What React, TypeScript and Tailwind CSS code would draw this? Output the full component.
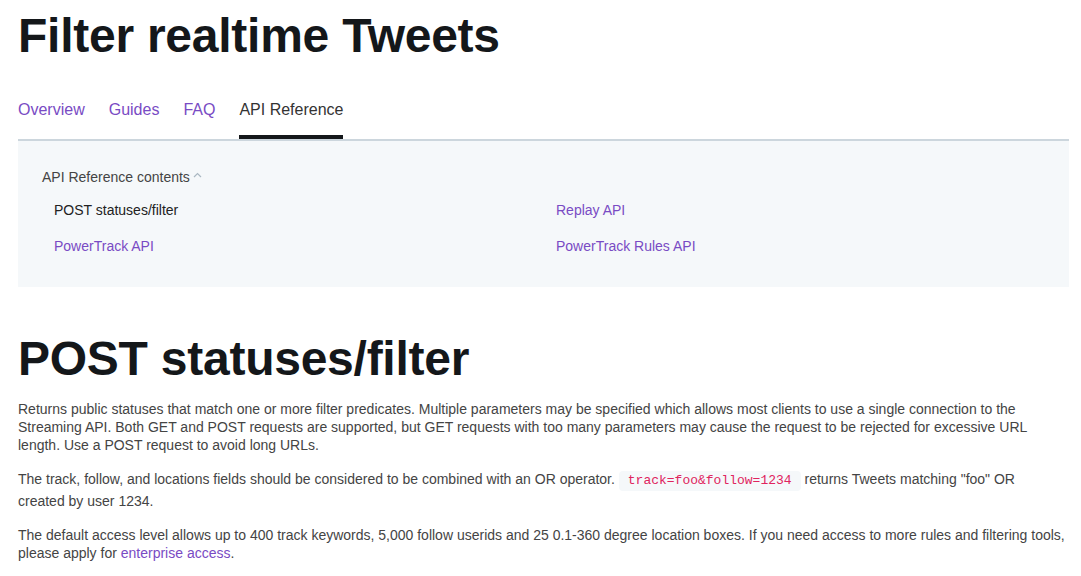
import React from "react";

const tabs = ["Overview", "Guides", "FAQ", "API Reference"];

const contents = [
  { label: "POST statuses/filter", active: true },
  { label: "Replay API", active: false },
  { label: "PowerTrack API", active: false },
  { label: "PowerTrack Rules API", active: false },
];

export default function App() {
  return (
    <div
      className="w-[1081px] min-h-[576px] bg-white pl-[18px] pr-[12px] text-[#444]"
      style={{ fontFamily: '"Liberation Sans", Arial, sans-serif' }}
    >
      <h1 className="pt-[7px] text-[48px] leading-[58px] font-bold tracking-[-0.25px] text-[#14171a]">
        Filter realtime Tweets
      </h1>

      {/* tabs */}
      <div className="mt-[33px] flex gap-6 border-b-2 border-[#ccd6dd]">
        {tabs.map((t) => (
          <div
            key={t}
            className={`pb-[13px] text-[16px] leading-[24px] ${
              t === "API Reference"
                ? "border-b-4 border-[#14171a] text-[#333]"
                : "border-b-4 border-transparent text-[#794bc4]"
            }`}
          >
            {t}
          </div>
        ))}
      </div>

      {/* contents box */}
      <div className="bg-[#f5f8fa] pl-[24px] pt-[26px] pb-[31px]">
        <div className="flex items-center text-[14px] leading-[20px] text-[#444]">
          API Reference contents
          <svg width="9" height="6" viewBox="0 0 9 6" className="ml-[3px] -mt-[4px]">
            <path d="M1 5 L4.5 1.5 L8 5" fill="none" stroke="#aab8c2" strokeWidth="1.2" />
          </svg>
        </div>
        <ul className="mt-[13px] grid grid-cols-[502px_1fr] gap-y-[16px] pl-[12px] text-[14px] leading-[20px]">
          {contents.map((c) => (
            <li key={c.label} className={c.active ? "text-[#222]" : "text-[#794bc4]"}>
              {c.label}
            </li>
          ))}
        </ul>
      </div>

      <h2 className="mt-[43px] text-[48px] leading-[58px] font-bold tracking-[-0.25px] text-[#14171a]">
        POST statuses/filter
      </h2>

      <div className="mt-[12px] text-[14px] leading-[18px]">
        <p className="mb-[16px]">
          Returns public statuses that match one or more filter predicates. Multiple parameters may be
          specified which allows most clients to use a single connection to the Streaming API. Both GET
          and POST requests are supported, but GET requests with too many parameters may cause the
          request to be rejected for excessive URL length. Use a POST request to avoid long URLs.
        </p>
        <p className="mb-[16px]">
          The track, follow, and locations fields should be considered to be combined with an OR
          operator.{" "}
          <code
            className="my-[1px] inline-block rounded-[4px] bg-[#f5f8fa] px-[9px] py-[2px] text-[13px] leading-[16px] text-[#e0245e]"
            style={{ fontFamily: '"Liberation Mono", "Courier New", monospace' }}
          >
            track=foo&amp;follow=1234
          </code>{" "}
          returns Tweets matching "foo" OR
          <br />
          created by user 1234.
        </p>
        <p>
          The default access level allows up to 400 track keywords, 5,000 follow userids and 25
          0.1-360 degree location boxes. If you need access to more rules and filtering tools, please
          apply for <a className="text-[#794bc4]">enterprise access</a>.
        </p>
      </div>
    </div>
  );
}
